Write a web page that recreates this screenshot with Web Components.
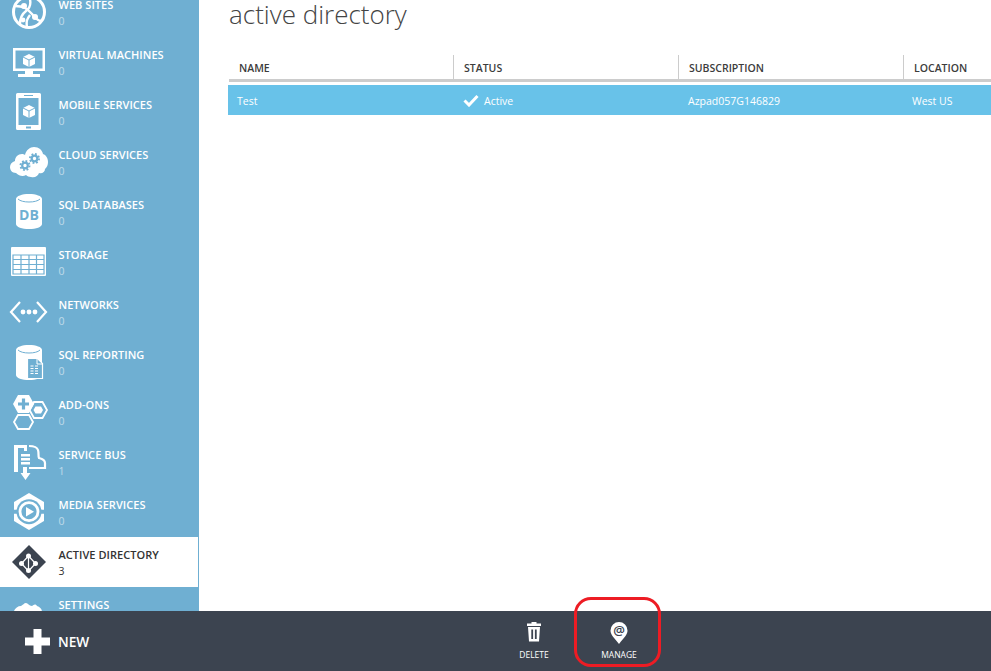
<!DOCTYPE html>
<html><head><meta charset="utf-8"><style>
html,body{margin:0;height:100%;overflow:hidden;background:#fff;font-family:"Open Sans","Noto Sans",sans-serif}
svg{display:block}
</style></head><body>
<portal-shell>
<side-nav slot="nav">
<nav-item label="WEB SITES" count="0"><svg width="58" height="50" viewBox="0 0 58 50"><circle cx="29" cy="25" r="15.5" fill="none" stroke="#fff" stroke-width="3"/><path d="M15 19c8 0 12 2 17 8s8 8 10 6M20 37c0-7 2-10 6-13s6-7 3-15M30 28c-3 4-4 6-3 12" fill="none" stroke="#fff" stroke-width="2.4"/><circle cx="24" cy="19" r="3" fill="#fff"/><circle cx="35" cy="30" r="3" fill="#fff"/><circle cx="23" cy="33" r="2.4" fill="#fff"/></svg></nav-item>
<nav-item label="VIRTUAL MACHINES" count="0"><svg width="58" height="50" viewBox="0 0 58 50"><path fill="#fff" fill-rule="evenodd" d="M13 11h32v23H33v3h7v3H18v-3h7v-3H13zM15.500 13.500v18h27v-18z"/><path fill="#fff" d="M29 17l6 3v7l-6 3-6-3v-7z"/><path d="M23 20l6 3 6-3M29 23v7" fill="none" stroke="#6fafd2" stroke-width="1"/></svg></nav-item>
<nav-item label="MOBILE SERVICES" count="0"><svg width="58" height="50" viewBox="0 0 58 50"><path fill="#fff" fill-rule="evenodd" d="M17.500 6h22a1.500 1.500 0 0 1 1.500 1.500v34a1.500 1.500 0 0 1-1.500 1.500h-22a1.500 1.500 0 0 1-1.500-1.500v-34a1.500 1.500 0 0 1 1.500-1.500zM18.500 11v27h20V11zM24 8v1h9V8zM26 39.500v2h5v-2z"/><path fill="#fff" d="M29 18l6 3v7l-6 3-6-3v-7z"/><path d="M23 21l6 3 6-3M29 24v7" fill="none" stroke="#6fafd2" stroke-width="1"/></svg></nav-item>
<nav-item label="CLOUD SERVICES" count="0"><svg width="58" height="50" viewBox="0 0 58 50"><path fill="#fff" d="M16 36c-4 0-6-3-6-6 0-3 2-5 5-6 0-4 3-7 7-7 1 0 2 0 3 1 1-5 5-8 9-8 5 0 8 3 9 7 3 1 5 4 5 8 0 3-1 5-3 7 0 3-3 5-6 4-1 3-4 5-8 4-2 0-4-1-5-2-3 2-7 1-10-2z"/><g fill="none" stroke="#6fafd2"><circle cx="25" cy="28.500" r="2.800" stroke-width="2.200"/><circle cx="25" cy="28.500" r="4.600" stroke-width="1.800" stroke-dasharray="1.800 1.810"/><circle cx="34.500" cy="21.500" r="2.800" stroke-width="2.200"/><circle cx="34.500" cy="21.500" r="4.600" stroke-width="1.800" stroke-dasharray="1.800 1.810"/></g></svg></nav-item>
<nav-item label="SQL DATABASES" count="0"><svg width="58" height="50" viewBox="0 0 58 50"><path fill="#fff" d="M16 12c0-3 6-5 13-5s13 2 13 5v25c0 3-6 5-13 5s-13-2-13-5z"/><path d="M18 12c2 2 6 3 11 3s9-1 11-3" fill="none" stroke="#6fafd2" stroke-width="1"/><text x="29" y="33" text-anchor="middle" font-family="Open Sans" font-weight="700" font-size="14" fill="#6fafd2">DB</text></svg></nav-item>
<nav-item label="STORAGE" count="0"><svg width="58" height="50" viewBox="0 0 58 50"><rect x="11" y="10" width="35" height="29" rx="1" fill="#fff"/><path d="M13 18h31v19H13zM13 22.500h31M13 27.500h31M13 32.500h31M21 18v19M29 18v19M36.500 18v19" fill="none" stroke="#6fafd2" stroke-width="1.200"/></svg></nav-item>
<nav-item label="NETWORKS" count="0"><svg width="58" height="50" viewBox="0 0 58 50"><path d="M20 15l-9 10 9 10M37 15l9 10-9 10" fill="none" stroke="#fff" stroke-width="2.200"/><circle cx="23" cy="25" r="2.400" fill="#fff"/><circle cx="29" cy="25" r="2.400" fill="#fff"/><circle cx="35" cy="25" r="2.400" fill="#fff"/></svg></nav-item>
<nav-item label="SQL REPORTING" count="0"><svg width="58" height="50" viewBox="0 0 58 50"><path fill="#fff" d="M16 13c0-3 6-5 13-5s13 2 13 5v25c0 3-6 5-13 5s-13-2-13-5z"/><path d="M18 13c2 2 6 3 11 3s9-1 11-3" fill="none" stroke="#6fafd2" stroke-width="1"/><path d="M27.500 21.500h10l5 5v15h-15z" fill="#6fafd2" stroke="#fff" stroke-width="1.200"/><path d="M37 22v5h5" fill="none" stroke="#fff"/><path d="M30.500 29h3M35 29h3M30.500 31.500h3M35 31.500h3M30.500 34h3M35 34h3M30.500 36.500h3M35 36.500h3" stroke="#fff" stroke-width="1.100"/></svg></nav-item>
<nav-item label="ADD-ONS" count="0"><svg width="58" height="50" viewBox="0 0 58 50"><path fill="#fff" d="M18 8h11l5 9-5 9H18l-5-9z"/><path d="M23.500 11.500v11M18 17h11" stroke="#6fafd2" stroke-width="3.200"/><path d="M34 15h8.500l4.500 8-4.500 8H34l-4.500-8z" fill="none" stroke="#fff" stroke-width="1.800"/><path d="M35.500 19.500h5.500l2 3.500-2 3.500h-5.500l-2-3.500z" fill="#fff"/><path d="M18 28h11l4 7-4 7H18l-4-7z" fill="none" stroke="#fff" stroke-width="1.800"/></svg></nav-item>
<nav-item label="SERVICE BUS" count="1"><svg width="58" height="50" viewBox="0 0 58 50"><path fill="#fff" d="M14 8h13v6h-3v-3h-6v24h-4z"/><path d="M21 17h9v2.500h-9zM21 21h9v2.500h-9zM21 25h9v2.500h-9z" fill="#fff"/><path d="M29 9c4 0 8 1 9 4s0 6 1 8c4 1 6 2 6 5v5H29" fill="none" stroke="#fff" stroke-width="2.200"/><path d="M23 30h4v6h3.500l-5 7-5-7H23z" fill="#fff"/></svg></nav-item>
<nav-item label="MEDIA SERVICES" count="0"><svg width="58" height="50" viewBox="0 0 58 50"><path d="M29 6l15 9v19l-15 9-15-9V15z" fill="#fff"/><circle cx="29" cy="24.700" r="12.500" fill="#6fafd2"/><path d="M13 24.700h6M39 24.700h6" stroke="#6fafd2" stroke-width="4"/><circle cx="29" cy="24.700" r="9" fill="none" stroke="#fff" stroke-width="2.800"/><path d="M26 20l8 4.700-8 4.700z" fill="#fff"/></svg></nav-item>
<nav-item label="ACTIVE DIRECTORY" count="3" active><svg width="58" height="50" viewBox="0 0 58 50"><path d="M29 8l17 17-17 17-17-17z" fill="#3c4450"/><path d="M28.500 19l-7 7.500 7 7.500 7-7.500zM28.500 19v15" fill="none" stroke="#fff" stroke-width="1.200"/><circle cx="28.500" cy="19" r="2.500" fill="#fff"/><circle cx="21.500" cy="26.500" r="2.500" fill="#fff"/><circle cx="35.500" cy="26.500" r="2.500" fill="#fff"/><circle cx="28.500" cy="33.500" r="2.500" fill="#fff"/></svg></nav-item>
<nav-item label="SETTINGS" count=""><svg width="58" height="50" viewBox="0 0 58 50"><path fill="#fff" d="M14 24c1-3 4-5 7-5 2-1 3-3 5-3s3 3 6 3c2-2 4-2 5 0 3 1 5 3 5 6v2H14z"/></svg></nav-item>
</side-nav>
<dir-view slot="main"></dir-view>
<command-bar slot="bar"></command-bar>
</portal-shell>
<script>
function def(name,html,init){customElements.define(name,class extends HTMLElement{constructor(){super();this.attachShadow({mode:"open"}).innerHTML=html;}connectedCallback(){init&&init(this);}});}
def("portal-shell",`<style>:host{display:grid;grid-template-columns:199px 1fr;grid-template-rows:611px 60px;width:100%;height:671px;position:relative}
.bar{grid-column:1/3}</style><slot name="nav"></slot><slot name="main"></slot><div class="bar"><slot name="bar"></slot></div>`);
def("side-nav",`<style>:host{display:block;background:#6fafd2;height:611px;overflow:hidden}
.in{margin-top:-13px;display:flex;flex-direction:column}</style><div class="in"><slot></slot></div>`);
def("nav-item",`<style>:host{display:flex;height:50px;flex:none;color:#fff;box-sizing:border-box}
:host([active]){background:#fff;color:#333;margin-right:1px}
.t{padding-top:10px}.l{font-size:11px;font-weight:600;line-height:16px;letter-spacing:.04px;white-space:nowrap}
.c{font-size:10.500px;line-height:17px;opacity:.55}:host([active]) .c{opacity:1}
.i{width:58.500px;flex:none}</style><div class="i"><slot></slot></div><div class="t"><div class="l"></div><div class="c"></div></div>`,
el=>{const r=el.shadowRoot;r.querySelector(".l").textContent=el.getAttribute("label");r.querySelector(".c").textContent=el.getAttribute("count");});
def("dir-view",`<style>:host{display:block;padding-left:30px;color:#444;min-width:0}
h1{margin:0;font-weight:300;font-size:26px;line-height:28px;color:#444;height:55px}
.g{display:grid;grid-template-columns:225px 225px 225px 1fr}
.h{height:24px;font-size:10.500px;font-weight:600;color:#3c3c3c;box-sizing:border-box;padding:5px 0 0 10px;line-height:16px;border-right:1px solid #ccc}
.h:last-child{border-right:0}
.rule{height:3px;background:#ccc;margin-bottom:3px}
.row{display:grid;grid-template-columns:225px 225px 225px 1fr;background:#68c2e9;color:#fff;height:30px;margin-left:-1px;font-size:10.500px}
.row div{padding-left:10px;padding-top:2px;display:flex;align-items:center;gap:5px}
.row div:first-child,.row div:last-child{padding-left:9px}
.row svg{margin-top:-2px}
</style><h1>active directory</h1>
<div class="g"><div class="h">NAME</div><div class="h">STATUS</div><div class="h">SUBSCRIPTION</div><div class="h">LOCATION</div></div>
<div class="rule"></div>
<div class="row"><div>Test</div><div><svg width="16" height="13" viewBox="0 0 16 13" style="display:block"><path d="M1.500 6.500l4.500 4.500 8.500-9" fill="none" stroke="#fff" stroke-width="3"/></svg>Active</div><div>Azpad057G146829</div><div>West US</div></div>`);
def("command-bar",`<style>:host{display:flex;background:#3c4450;height:60px;color:#fff;position:relative;align-items:stretch}
.new{display:flex;align-items:center;gap:8px;padding-left:25px;width:492px;box-sizing:border-box;font-size:13.700px;font-weight:600}
.a{width:84px;display:flex;flex-direction:column;align-items:center;font-size:8.500px;padding-top:11px;line-height:12px}
.a svg{display:block;height:24px;margin-bottom:3px}
.a.m{width:86px}
.mark{position:absolute;left:574px;top:-14px;width:87px;height:70px;box-sizing:border-box;border:3px solid #ed1c24;border-radius:17px}
</style>
<div class="new"><svg width="25" height="25" viewBox="0 0 25 25" style="display:block"><path fill="#fff" d="M8.500 0h8v8.500H25v8h-8.500V25h-8v-8.500H0v-8h8.500z"/></svg>NEW</div>
<div class="a"><svg width="16" height="24" viewBox="0 0 16 24"><path fill="#fff" fill-rule="evenodd" d="M5.500 0h5v1.500H15V4H1V1.500h4.500zM2 5h12l-1 14.500H3zM5.300 7.500v9.500h1.800V7.500zM8.900 7.500v9.500h1.800V7.500z"/></svg>DELETE</div>
<div class="a m"><svg width="18" height="24" viewBox="0 0 18 24"><path fill="#fff" d="M9 0a8.500 8.500 0 0 1 8.500 8.500c0 4-3 6.500-8.500 13.500C3.500 15 .5 12.500.5 8.500A8.500 8.500 0 0 1 9 0z"/><text x="9" y="12.800" text-anchor="middle" font-family="Open Sans" font-weight="600" font-size="13" fill="#3c4450">@</text></svg>MANAGE</div>
<div class="mark"></div>`);
</script>
</body></html>
